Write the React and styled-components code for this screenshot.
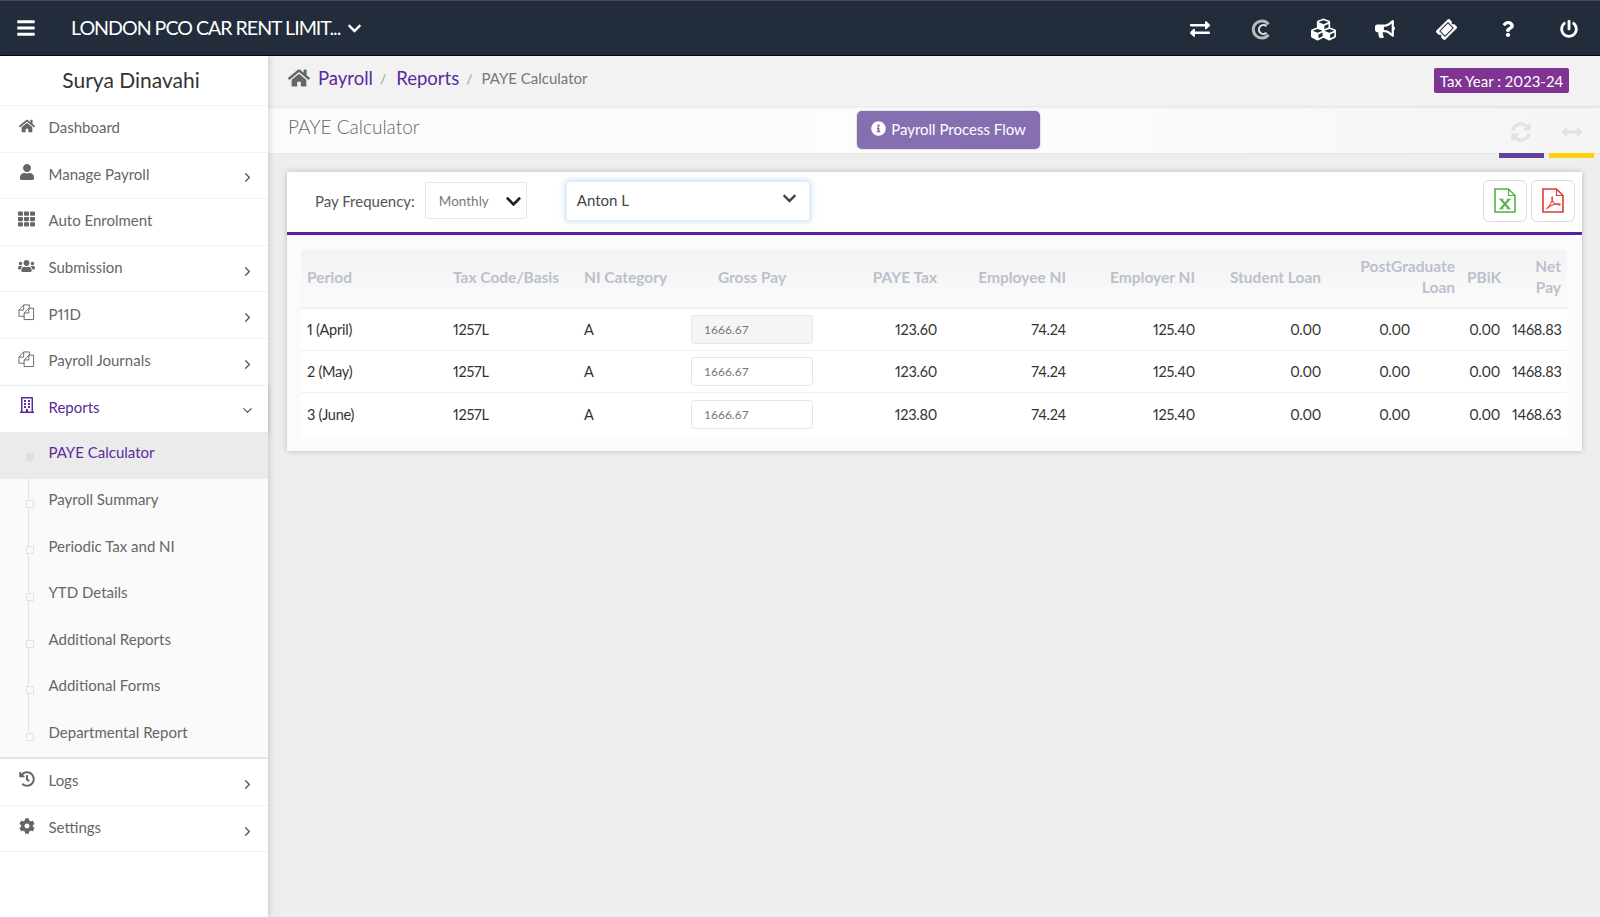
import React from 'react';
import styled, { createGlobalStyle } from 'styled-components';
import {
  FaBars, FaChevronDown, FaExchangeAlt, FaCubes, FaBullhorn, FaTicketAlt, FaQuestion, FaPowerOff,
  FaHome, FaUser, FaTh, FaUsers, FaRegBuilding, FaHistory, FaCog, FaInfoCircle, FaSyncAlt,
  FaArrowsAltH,
} from 'react-icons/fa';
import { LuChevronRight, LuChevronDown } from 'react-icons/lu';

const purple = '#5a2a9c';
const font = '"Lato", "Noto Sans", sans-serif';

const GlobalStyle = createGlobalStyle`
  html, body {
    margin: 0;
    padding: 0;
    background: #eeeeee;
    font-family: ${font};
    font-variant-numeric: lining-nums proportional-nums;
  }
  * { box-sizing: border-box; }
`;

const Page = styled.div`
  width: 1600px;
  height: 917px;
  overflow: hidden;
  display: flex;
  flex-direction: column;
`;

const TopBar = styled.header`
  height: 56px;
  flex: none;
  display: flex;
  align-items: center;
  background: #222c3b;
  border-top: 1px solid #4a4a4a;
  border-bottom: 1px solid #0c0c0c;
  color: #fff;
  padding: 2px 0 0 16px;
`;

const Burger = styled.span`
  display: flex;
  font-size: 20px;
  margin-right: 35px;
  margin-top: -2px;
`;

const Company = styled.div`
  display: flex;
  align-items: center;
  gap: 7px;
  font-size: 19.6px;
  letter-spacing: -1px;
  margin-top: -4px;
  svg { margin-top: 2px; }
`;

const TopIcons = styled.nav`
  margin-left: auto;
  display: flex;
  align-items: center;
`;

const TopIcon = styled.span`
  width: 61.5px;
  height: 30px;
  display: flex;
  align-items: center;
  justify-content: center;
  font-size: ${(p) => p.$size || 20}px;
  svg { transform: rotate(${(p) => p.$rotate || 0}deg); }
`;

const Body = styled.div`
  flex: 1;
  display: flex;
  min-height: 0;
`;

const Sidebar = styled.aside`
  width: 268px;
  flex: none;
  background: #fff;
  box-shadow: 2px 0 5px rgba(0, 0, 0, 0.14);
  position: relative;
  z-index: 2;
`;

const UserName = styled.div`
  height: 50px;
  display: flex;
  align-items: center;
  justify-content: center;
  padding: 0 6px 3px 0;
  font-size: 21px;
  color: #333;
  border-bottom: 1px solid #f2f2f2;
`;

const MenuItem = styled.div`
  height: 46.6px;
  display: flex;
  align-items: center;
  padding: 0 13px 3px 18px;
  font-size: 15px;
  color: ${(p) => (p.$active ? purple : '#666')};
  border-bottom: 1px solid ${(p) => (p.$flat ? 'transparent' : '#f2f2f2')};
  position: relative;
  box-shadow: ${(p) => (p.$flat ? '0 2px 5px rgba(0,0,0,0.16)' : 'none')};
`;

const MenuIcon = styled.span`
  width: 17px;
  height: 18px;
  margin-right: 13.5px;
  margin-top: -3px;
  display: flex;
  align-items: center;
  justify-content: center;
  font-size: ${(p) => p.$size || 16}px;
`;

const MenuArrow = styled.span`
  margin-left: auto;
  display: flex;
  font-size: 15px;
  color: #555;
  padding-top: 8px;
`;

const SubMenu = styled.div`
  height: 327px;
  background: #fafafa;
  position: relative;
  border-bottom: 2px solid #e4e4e4;
  &::before {
    content: '';
    position: absolute;
    left: 28px;
    top: 0;
    bottom: 24px;
    width: 1px;
    background: #e4e4e4;
  }
`;

const SubItem = styled.div`
  height: 46.6px;
  display: flex;
  align-items: center;
  padding: 0 0 6px 48.5px;
  font-size: 15px;
  color: ${(p) => (p.$active ? purple : '#666')};
  background: ${(p) => (p.$active ? '#ebebeb' : 'transparent')};
  position: relative;
  &::before {
    content: '';
    position: absolute;
    left: 25.5px;
    top: 21px;
    width: 6px;
    height: 6px;
    border: 1px solid #e2e2e2;
    background: ${(p) => (p.$active ? '#dedede' : '#fafafa')};
  }
`;

const Main = styled.main`
  flex: 1;
  min-width: 0;
  background: #eeeeee;
`;

const CrumbBar = styled.div`
  height: 50px;
  display: flex;
  align-items: center;
  background: #f2f2f2;
  padding: 0 31px 2px 20px;
  box-shadow: 0 1px 3px rgba(0, 0, 0, 0.12);
  position: relative;
  z-index: 1;
`;

const CrumbHome = styled.span`
  display: flex;
  font-size: 22px;
  color: #666;
  margin: -4px 8px 0 0;
`;

const CrumbLink = styled.a`
  font-size: 18.5px;
  color: ${purple};
  margin-top: -5px;
`;

const CrumbSep = styled.span`
  font-size: 14px;
  color: #999;
  margin: -4px 10px 0 7px;
`;

const CrumbNow = styled.span`
  font-size: 15px;
  color: #777;
  margin: -4px 0 0 -1px;
`;

const TaxYear = styled.span`
  margin-left: auto;
  height: 25px;
  width: 135px;
  margin-top: 1px;
  display: flex;
  align-items: center;
  justify-content: center;
  background: #7f3393;
  border-radius: 2px;
  color: #fff;
  font-size: 15px;
`;

const HeadBar = styled.div`
  height: 48px;
  display: grid;
  grid-template-columns: 569px 183px 1fr;
  align-items: start;
  padding-left: 20px;
  background: linear-gradient(90deg, #fbfbfb, #fdfdfd 50%, #f5f5f5);
  border-bottom: 1px solid #e6e6e6;
  position: relative;
`;

const PageTitle = styled.h1`
  margin: 9px 0 0;
  font-size: 19px;
  font-weight: 300;
  color: #666;
`;

const ProcessButton = styled.button`
  margin-top: 5px;
  height: 38px;
  border: 0;
  border-radius: 5px;
  background: #866fb1;
  color: #fff;
  font-family: ${font};
  font-size: 15px;
  display: flex;
  align-items: center;
  justify-content: center;
  gap: 5px;
  box-shadow: 0 0 2px rgba(0, 0, 0, 0.35);
  padding: 0 0 3px;
`;

const HeadTools = styled.div`
  display: flex;
  justify-content: flex-end;
  color: #e2e2e2;
  margin-top: 16px;
  gap: 31px;
  padding-right: 18px;
  font-size: 20px;
`;

const AccentBar = styled.span`
  position: absolute;
  bottom: -5px;
  right: ${(p) => p.$right}px;
  width: 45px;
  height: 5px;
  background: ${(p) => p.$color};
`;

const Card = styled.section`
  margin: 18px 18px 0 19px;
  height: 279px;
  background: #fbfbfb;
  box-shadow: 0 0 6px rgba(0, 0, 0, 0.22);
`;

const CardHead = styled.div`
  height: 63px;
  display: flex;
  align-items: center;
  background: #fff;
  border-bottom: 3px solid #5a1f9e;
  padding: 0 7px 3px 28px;
`;

const FieldLabel = styled.label`
  font-size: 15px;
  color: #555;
  margin-right: 10px;
`;

const FreqSelect = styled.div`
  width: 102px;
  height: 37px;
  display: flex;
  align-items: center;
  justify-content: space-between;
  padding: 1px 4px 0 13px;
  border: 1px solid #e8e8e8;
  border-radius: 3px;
  font-size: 13.5px;
  color: #777;
  margin-right: 39px;
  svg { color: #222; font-size: 17px; }
`;

const EmployeeSelect = styled.div`
  width: 244px;
  height: 40px;
  display: flex;
  align-items: center;
  justify-content: space-between;
  padding: 0 12px 2px 10px;
  background: #fff;
  border-radius: 2px;
  border: 1px solid #e4eef8;
  box-shadow: 0 0 6px rgba(120, 170, 225, 0.55);
  font-size: 15px;
  color: #444;
  svg { color: #444; font-size: 15px; margin-top: -2px; }
`;

const Exports = styled.div`
  margin-left: auto;
  display: flex;
  gap: 4px;
`;

const ExportButton = styled.button`
  width: 44px;
  height: 42px;
  display: flex;
  align-items: center;
  justify-content: center;
  background: #fff;
  border: 1px solid #dcdcdc;
  border-radius: 6px;
  color: ${(p) => p.$color};
  padding: 0;
`;

const TableWrap = styled.div`
  padding: 15px 15px 0 14px;
`;

const Table = styled.table`
  width: 1266px;
  table-layout: fixed;
  border-collapse: collapse;
  background: #fff;
`;

const Col = styled.col`
  width: ${(p) => p.$w}px;
`;

const HeadRow = styled.tr`
  height: 58px;
  background: linear-gradient(180deg, #f3f3f3, #fafafa);
  border-bottom: 1px solid #e8eef3;
`;

const Th = styled.th`
  padding: 0 6px 3px;
  font-size: 15.5px;
  font-weight: 700;
  line-height: 21px;
  color: #bac1cc;
  text-align: ${(p) => p.$align || 'right'};
`;

const Row = styled.tr`
  height: ${(p) => p.$h}px;
  border-bottom: 1px solid #eaf0f4;
  &:last-child { border-bottom: 0; }
`;

const Td = styled.td`
  padding: 0 ${(p) => p.$pad || 6}px 0 6px;
  font-size: 14.5px;
  letter-spacing: -0.25px;
  white-space: nowrap;
  color: #333;
  text-align: ${(p) => p.$align || 'right'};
`;

const GrossInput = styled.input`
  display: block;
  width: 122px;
  height: 29px;
  padding: 0 12px;
  font-family: ${font};
  font-size: 12px;
  color: #777;
  border: 1px solid #e6e6e6;
  border-radius: 3px;
  background: ${(p) => (p.readOnly ? '#f5f5f5' : '#fff')};
`;

const CopyIcon = () => (
  <svg width="18" height="18" viewBox="0 0 18 18" fill="none" stroke="currentColor" strokeWidth="1">
    <path d="M6.500 13.500H1V7L6 1.500h6V5" />
    <path d="M6 1.500V7H1" />
    <path d="M6.500 10l5-5h5v12h-10z" />
    <path d="M11.500 5v5h-5" />
  </svg>
);

const CoinIcon = () => (
  <svg width="21" height="21" viewBox="0 0 21 21" fill="none">
    <path d="M17.500 5.200A8.500 8.500 0 1 0 17.500 15.800" stroke="#b9b9b9" strokeWidth="3" />
    <path d="M15.500 7.200A4.500 4.500 0 1 0 15.500 13.800" stroke="#e6e6e6" strokeWidth="2" />
  </svg>
);

const ExcelIcon = () => (
  <svg width="22" height="25" viewBox="0 0 22 25" fill="none" stroke="currentColor">
    <path d="M1 1h13.500L21 7.500V24H1z" strokeWidth="1.600" />
    <path d="M14.500 1v6.500H21" strokeWidth="1.200" />
    <path d="M7 11.500l8 9M15 11.500l-8 9" strokeWidth="2" />
    <path d="M5 11.200h4.500M12.500 11.200H17M5 20.800h4.500M12.500 20.800H17" strokeWidth="1" />
  </svg>
);

const PdfIcon = () => (
  <svg width="22" height="25" viewBox="0 0 22 25" fill="none" stroke="currentColor">
    <path d="M1 1h13.500L21 7.500V24H1z" strokeWidth="1.600" />
    <path d="M14.500 1v6.500H21" strokeWidth="1.200" />
    <path
      d="M4.500 21C7.500 18 10 14 10.500 10.500C10.800 8.500 9.500 8.500 9.800 11C10.400 14.500 13 16.500 17 17C19 17.200 18.500 15.500 16 15.700C12.500 16 8.500 17.500 5.500 20"
      strokeWidth="1.100"
    />
  </svg>
);

const menuTop = [
  { label: 'Dashboard', icon: <FaHome /> },
  { label: 'Manage Payroll', icon: <FaUser />, arrow: true },
  { label: 'Auto Enrolment', icon: <FaTh />, size: 18 },
  { label: 'Submission', icon: <FaUsers />, size: 20, arrow: true },
  { label: 'P11D', icon: <CopyIcon />, arrow: true },
  { label: 'Payroll Journals', icon: <CopyIcon />, arrow: true },
];

const subItems = ['PAYE Calculator', 'Payroll Summary', 'Periodic Tax and NI', 'YTD Details', 'Additional Reports', 'Additional Forms', 'Departmental Report'];

const menuBottom = [
  { label: 'Logs', icon: <FaHistory />, arrow: true },
  { label: 'Settings', icon: <FaCog />, arrow: true },
];

const colWidths = [146, 131, 107, 134, 124, 129, 129, 126, 134, 45, 61];

const rows = [
  { period: '1 (April)', paye: '123.60', net: '1468.83', locked: true, h: 42 },
  { period: '2 (May)', paye: '123.60', net: '1468.83', h: 42 },
  { period: '3 (June)', paye: '123.80', net: '1468.63', h: 44 },
];

export default function App() {
  return (
    <Page>
      <GlobalStyle />
      <TopBar>
        <Burger><FaBars /></Burger>
        <Company>
          LONDON PCO CAR RENT LIMIT...
          <FaChevronDown size={15} />
        </Company>
        <TopIcons>
          <TopIcon><FaExchangeAlt /></TopIcon>
          <TopIcon><CoinIcon /></TopIcon>
          <TopIcon $size={25}><FaCubes /></TopIcon>
          <TopIcon><FaBullhorn /></TopIcon>
          <TopIcon $rotate={-45} $size={19}><FaTicketAlt /></TopIcon>
          <TopIcon $size={16}><FaQuestion /></TopIcon>
          <TopIcon $size={18}><FaPowerOff /></TopIcon>
        </TopIcons>
      </TopBar>
      <Body>
        <Sidebar>
          <UserName>Surya Dinavahi</UserName>
          {menuTop.map((m) => (
            <MenuItem key={m.label}>
              <MenuIcon $size={m.size}>{m.icon}</MenuIcon>
              {m.label}
              {m.arrow && <MenuArrow><LuChevronRight /></MenuArrow>}
            </MenuItem>
          ))}
          <MenuItem $active $flat>
            <MenuIcon><FaRegBuilding /></MenuIcon>
            Reports
            <MenuArrow><LuChevronDown /></MenuArrow>
          </MenuItem>
          <SubMenu>
            {subItems.map((s, i) => (
              <SubItem key={s} $active={i === 0}>{s}</SubItem>
            ))}
          </SubMenu>
          {menuBottom.map((m) => (
            <MenuItem key={m.label}>
              <MenuIcon>{m.icon}</MenuIcon>
              {m.label}
              <MenuArrow><LuChevronRight /></MenuArrow>
            </MenuItem>
          ))}
        </Sidebar>
        <Main>
          <CrumbBar>
            <CrumbHome><FaHome /></CrumbHome>
            <CrumbLink>Payroll</CrumbLink>
            <CrumbSep>/</CrumbSep>
            <CrumbLink>Reports</CrumbLink>
            <CrumbSep>/</CrumbSep>
            <CrumbNow>PAYE Calculator</CrumbNow>
            <TaxYear>Tax Year : 2023-24</TaxYear>
          </CrumbBar>
          <HeadBar>
            <PageTitle>PAYE Calculator</PageTitle>
            <ProcessButton><FaInfoCircle size={15} /> Payroll Process Flow</ProcessButton>
            <HeadTools>
              <FaSyncAlt />
              <FaArrowsAltH />
            </HeadTools>
            <AccentBar $right={56} $color="#64409b" />
            <AccentBar $right={6} $color="#ffd10f" />
          </HeadBar>
          <Card>
            <CardHead>
              <FieldLabel>Pay Frequency:</FieldLabel>
              <FreqSelect>Monthly <FaChevronDown /></FreqSelect>
              <EmployeeSelect>Anton L <FaChevronDown /></EmployeeSelect>
              <Exports>
                <ExportButton $color="#57b04a"><ExcelIcon /></ExportButton>
                <ExportButton $color="#e03a32"><PdfIcon /></ExportButton>
              </Exports>
            </CardHead>
            <TableWrap>
              <Table>
                <colgroup>
                  {colWidths.map((w, i) => <Col key={i} $w={w} />)}
                </colgroup>
                <thead>
                  <HeadRow>
                    <Th $align="left">Period</Th>
                    <Th $align="left">Tax Code/Basis</Th>
                    <Th $align="left">NI Category</Th>
                    <Th $align="center">Gross Pay</Th>
                    <Th>PAYE Tax</Th>
                    <Th>Employee NI</Th>
                    <Th>Employer NI</Th>
                    <Th>Student Loan</Th>
                    <Th>PostGraduate Loan</Th>
                    <Th>PBiK</Th>
                    <Th>Net Pay</Th>
                  </HeadRow>
                </thead>
                <tbody>
                  {rows.map((r) => (
                    <Row key={r.period} $h={r.h}>
                      <Td $align="left">{r.period}</Td>
                      <Td $align="left">1257L</Td>
                      <Td $align="left">A</Td>
                      <Td><GrossInput defaultValue="1666.67" readOnly={r.locked} /></Td>
                      <Td>{r.paye}</Td>
                      <Td>74.24</Td>
                      <Td>125.40</Td>
                      <Td>0.00</Td>
                      <Td $pad={51}>0.00</Td>
                      <Td>0.00</Td>
                      <Td>{r.net}</Td>
                    </Row>
                  ))}
                </tbody>
              </Table>
            </TableWrap>
          </Card>
        </Main>
      </Body>
    </Page>
  );
}
